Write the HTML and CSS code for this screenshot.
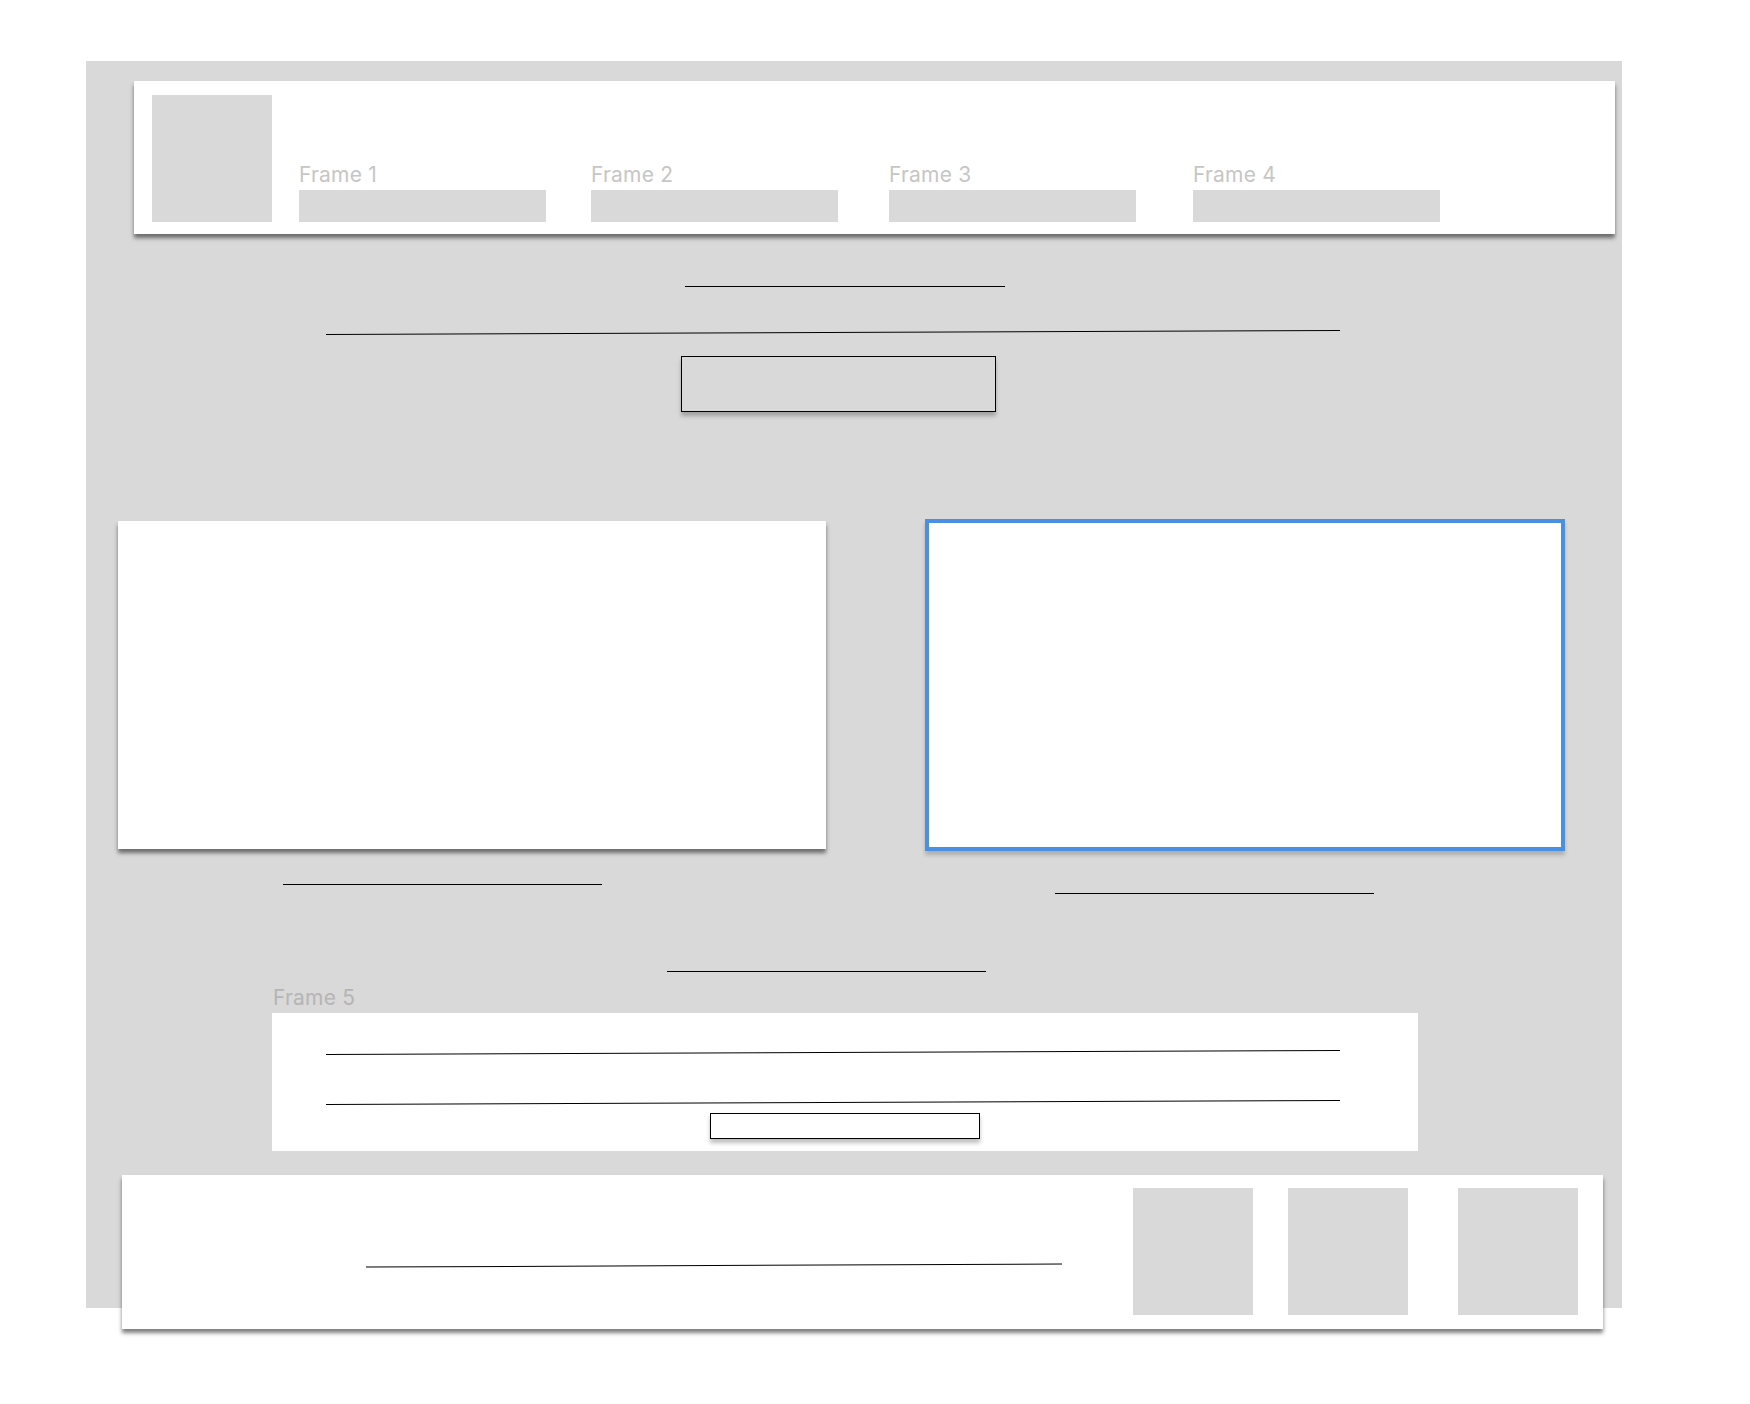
FILE: index.html
```html
<!DOCTYPE html>
<html lang="en">
<head>
<meta charset="utf-8">
<title>Wireframe</title>
<link rel="stylesheet" href="styles.css">
</head>
<body>
<div class="canvas">
  <header class="header">
    <div class="ph logo"></div>
    <div class="frame f1"><div class="label">Frame 1</div><div class="ph bar"></div></div>
    <div class="frame f2"><div class="label">Frame 2</div><div class="ph bar"></div></div>
    <div class="frame f3"><div class="label">Frame 3</div><div class="ph bar"></div></div>
    <div class="frame f4"><div class="label">Frame 4</div><div class="ph bar"></div></div>
  </header>

  <div class="rule title-rule"></div>
  <div class="rule slant hero-rule"></div>
  <div class="outline hero-button"></div>

  <section class="cards">
    <div class="card-col">
      <div class="card card-left"></div>
      <div class="rule caption caption-left"></div>
    </div>
    <div class="card-col">
      <div class="card card-right"></div>
      <div class="rule caption caption-right"></div>
    </div>
  </section>

  <div class="rule section-rule"></div>

  <section class="frame5">
    <div class="label label-dark">Frame 5</div>
    <div class="frame5-box">
      <div class="rule slant f5-rule1"></div>
      <div class="rule slant f5-rule2"></div>
      <div class="outline f5-button"></div>
    </div>
  </section>

  <footer class="footer">
    <div class="rule slant footer-rule"></div>
    <div class="ph tile t1"></div>
    <div class="ph tile t2"></div>
    <div class="ph tile t3"></div>
  </footer>
</div>
</body>
</html>
```

FILE: styles.css
```css
* { box-sizing: border-box; }

html, body {
  margin: 0;
  padding: 0;
  background: #ffffff;
}

body {
  min-height: 1404px;
  font-family: Inter, Roboto, "Liberation Sans", Arial, sans-serif;
}

/* The grey artboard is 1247px tall; the footer hangs 21px below it,
   so the grey is painted as a sized background on a taller box. */
.canvas {
  margin: 61px 0 0 86px;
  width: 1536px;
  padding-bottom: 40px;
  background: linear-gradient(#d9d9d9, #d9d9d9) top left / 100% 1247px no-repeat;
  display: flex;
  flex-direction: column;
  align-items: flex-start;
}

.canvas > * { flex-shrink: 0; }

.ph { background: #d9d9d9; }

/* Header */
.header {
  margin: 20px 0 0 48px;
  width: 1481px;
  height: 153px;
  padding: 14px 18px 12px;
  background: #ffffff;
  box-shadow: 0 4px 4px rgba(0, 0, 0, 0.5);
  display: flex;
  align-items: flex-end;
}

.logo { width: 120px; height: 127px; }

.frame { display: flex; flex-direction: column; }
.f1 { margin-left: 27px; }
.f2 { margin-left: 45px; }
.f3 { margin-left: 51px; }
.f4 { margin-left: 57px; }

.label {
  font-size: 21px;
  line-height: 21px;
  letter-spacing: 0.2px;
  color: #c6c6c6;
  margin-bottom: 5px;
  white-space: nowrap;
}

.label-dark { color: #b5b5b5; }

.bar { width: 247px; height: 32px; }

/* Lines */
.rule {
  height: 1px;
  background: #000000;
}

.slant { transform: rotate(-0.226deg); }

.title-rule { margin: 52px 0 0 599px; width: 320px; }
.hero-rule { margin: 45px 0 0 240px; width: 1014px; }

.outline {
  border: 1px solid #000000;
  box-shadow: 0 4px 4px rgba(0, 0, 0, 0.25);
}

.hero-button {
  margin: 23px 0 0 595px;
  width: 315px;
  height: 56px;
}

/* Cards */
.cards {
  margin: 107px 0 0 32px;
  display: flex;
  align-items: flex-start;
}

.card-col { display: flex; flex-direction: column; align-items: flex-start; }

.card { background: #ffffff; }

.card-left {
  margin-top: 2px;
  width: 708px;
  height: 328px;
  box-shadow: 0 4px 4px rgba(0, 0, 0, 0.5);
}

.card-col + .card-col { margin-left: 99px; }

.card-right {
  width: 640px;
  height: 332px;
  border: 4px solid #4a90e2;
  box-shadow: 0 4px 4px rgba(0, 0, 0, 0.2);
}

.caption { width: 319px; }
.caption-left { margin: 35px 0 0 165px; }
.caption-right { margin: 42px 0 0 130px; }

.section-rule { margin: 77px 0 0 581px; width: 319px; }

/* Frame 5 */
.frame5 {
  margin: 15px 0 0 186px;
  display: flex;
  flex-direction: column;
  align-items: flex-start;
}

.frame5 .label { margin-left: 1px; }

.frame5-box {
  width: 1146px;
  height: 138px;
  background: #ffffff;
  padding-top: 39px;
  display: flex;
  flex-direction: column;
  align-items: flex-start;
}

.f5-rule1 { margin-left: 54px; width: 1014px; }
.f5-rule2 { margin: 49px 0 0 54px; width: 1014px; }

.f5-button {
  margin: 10px 0 0 438px;
  width: 270px;
  height: 26px;
  background: #ffffff;
}

/* Footer */
.footer {
  margin: 24px 0 0 36px;
  width: 1481px;
  height: 154px;
  padding-top: 13px;
  background: #ffffff;
  box-shadow: 0 4px 4px rgba(0, 0, 0, 0.5);
  display: flex;
  align-items: flex-start;
}

.footer-rule {
  margin: 77px 0 0 244px;
  width: 696px;
  transform: rotate(-0.247deg);
}

.tile { width: 120px; height: 127px; }
.t1 { margin-left: 71px; }
.t2 { margin-left: 35px; }
.t3 { margin-left: 50px; }
```
